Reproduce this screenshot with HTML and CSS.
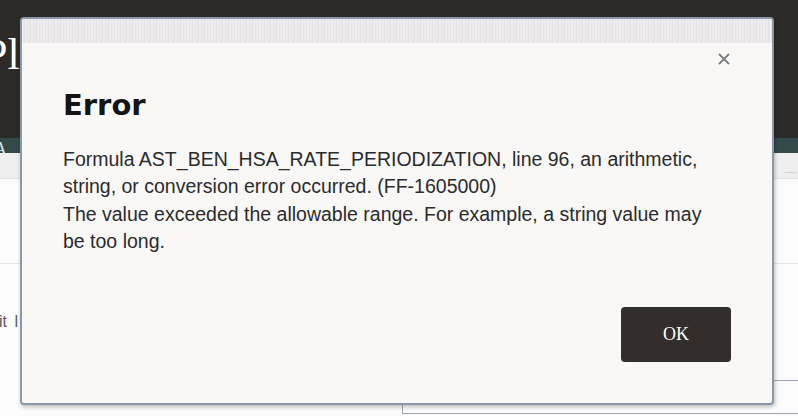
FILE: index.html
```html
<!DOCTYPE html>
<html>
<head>
<meta charset="utf-8">
<link rel="stylesheet" href="styles.css">
</head>
<body>
<div class="page">
  <header class="hdr">
    <div class="hdr-title">Ple</div>
  </header>
  <div class="hdr-strip"><span class="strip-a">A</span></div>
  <div class="subbar"><span class="sub-text">—</span></div>
  <div class="content">
    <div class="rule"></div>
    <div class="label">it l</div>
    <div class="field"></div>
  </div>
</div>
<div class="dialog">
  <div class="dlg-top"></div>
  <div class="dlg-body">
    <button class="close" aria-label="Close">
      <svg width="14" height="14" viewBox="0 0 14 14"><path d="M2 2 L12 12 M12 2 L2 12" stroke="#7d7d7d" stroke-width="1.8" fill="none"/></svg>
    </button>
    <h1 class="title">Error</h1>
    <p class="msg">Formula AST_BEN_HSA_RATE_PERIODIZATION, line 96, an arithmetic, string, or conversion error occurred. (FF-1605000)<br>The value exceeded the allowable range. For example, a string value may be too long.</p>
    <div class="actions"><button class="ok">OK</button></div>
  </div>
</div>
</body>
</html>
```
FILE: styles.css
```css
html, body { margin: 0; padding: 0; }
body { width: 798px; height: 416px; overflow: hidden; background: #fcfcfc; position: relative; font-family: "Liberation Sans", Arial, sans-serif; }
.page { width: 798px; height: 416px; display: flex; flex-direction: column; overflow: hidden; }
.hdr { background: #2e2a27; height: 138px; flex: none; overflow: hidden; }
.hdr-title { font-family: "Liberation Serif", serif; color: #fff; font-size: 44px; line-height: 44px; padding-top: 33px; margin-left: -17px; white-space: nowrap; }
.hdr-strip { height: 15px; flex: none; background: #33494a; color: #dfe6e6; font-family: "Liberation Serif", serif; font-size: 20px; line-height: 22px; overflow: hidden; }
.strip-a { margin-left: -7px; }
.subbar { height: 25px; flex: none; background: #efefef; border-bottom: 1px solid #e2e2e2; }
.sub-text { color: #d6d6d6; font-size: 12px; margin-left: 785px; line-height: 38px; }
.content { flex: 1; position: relative; background: #fcfcfc; }
.rule { position: absolute; left: 0; right: 0; top: 84px; border-top: 1px solid #dfe5ec; }
.label { position: absolute; left: -1px; top: 134px; font-size: 16px; line-height: 18px; word-spacing: 3px; color: #5a5a5a; }
.field { position: absolute; left: 402px; top: 201px; width: 420px; height: 32px; border: 1px solid #9ba6b1; }
.dialog { position: absolute; left: 20px; top: 17px; width: 754px; height: 388px; box-sizing: border-box; border: 2px solid #8a99a9; border-radius: 4px; background: #f9f8f7; box-shadow: 1px 2px 4px rgba(0,0,0,0.25); display: flex; flex-direction: column; overflow: hidden; }
.dlg-top { height: 24px; background: repeating-linear-gradient(90deg, #eceaea 0 2px, #e3e1e1 2px 3px, #efeded 3px 5px, #e7e5e5 5px 6px); flex: none; }
.dlg-body { flex: 1; position: relative; padding: 45px 41px 0 41px; display: flex; flex-direction: column; }
.close { position: absolute; right: 38px; top: 6px; width: 20px; height: 20px; border: 0; background: none; padding: 3px; }
.title { margin: 0; font-family: "DejaVu Sans", sans-serif; font-weight: bold; font-size: 29px; color: #141414; line-height: 34px; }
.msg { margin: 24px 0 0 0; font-size: 19.5px; line-height: 27.3px; color: #2b2b2b; width: 660px; }
.actions { margin-top: auto; display: flex; justify-content: flex-end; padding: 0 0 41px 0; }
.ok { width: 110px; height: 55px; background: #332e2b; color: #fff; border: 0; border-radius: 4px; font-family: "Liberation Serif", serif; font-size: 18px; }
```
